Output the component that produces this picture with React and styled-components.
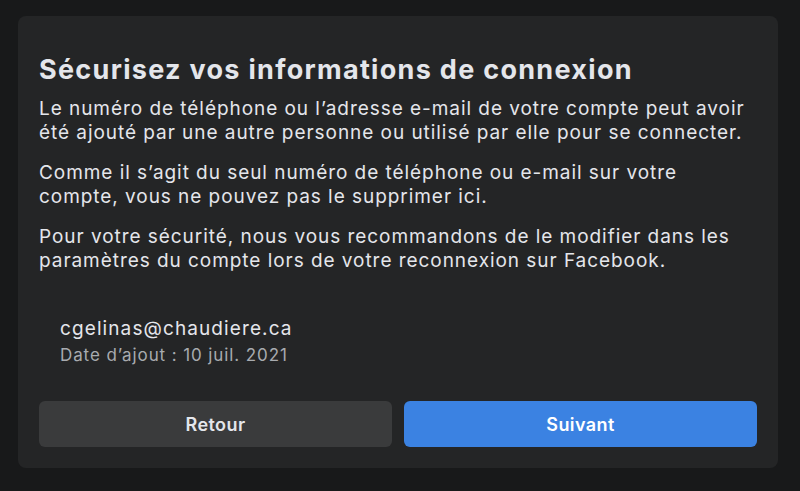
import styled, { createGlobalStyle } from "styled-components";

const Global = createGlobalStyle`
  html, body {
    margin: 0;
    padding: 0;
    background: #18191a;
    font-family: Inter, "Noto Sans", sans-serif;
    -webkit-font-smoothing: antialiased;
  }
`;

const Page = styled.div`
  padding: 16px 22px 23px 18px;
`;

const Card = styled.div`
  background: #242526;
  border-radius: 8px;
  padding: 38px 21px 21px 21px;
  display: flex;
  flex-direction: column;
`;

const Title = styled.h1`
  margin: 0 0 11px 0;
  font-size: 27px;
  line-height: 32px;
  font-weight: 700;
  letter-spacing: 1.3px;
  color: #e4e6eb;
`;

const Text = styled.p`
  margin: 0 0 16px 0;
  font-size: 19px;
  line-height: 24px;
  letter-spacing: 0.95px;
  color: #e4e6eb;
`;

const Contact = styled.div`
  padding: 28px 21px 35px;
  display: flex;
  flex-direction: column;
  gap: 3px;
`;

const Email = styled.div`
  font-size: 19px;
  line-height: 24px;
  letter-spacing: 1.1px;
  color: #e4e6eb;
`;

const Added = styled.div`
  font-size: 17px;
  line-height: 22px;
  letter-spacing: 0.9px;
  color: #a8abaf;
`;

const Actions = styled.div`
  display: grid;
  grid-template-columns: 1fr 1fr;
  gap: 12px;
`;

const Button = styled.button`
  height: 46px;
  border: none;
  border-radius: 6px;
  font-family: inherit;
  font-size: 18px;
  font-weight: 600;
  letter-spacing: 0.4px;
  color: ${(p) => (p.$primary ? "#ffffff" : "#e4e6eb")};
  background: ${(p) => (p.$primary ? "#3b82e2" : "#3a3b3c")};
  cursor: pointer;
`;

export default function App() {
  return (
    <>
      <Global />
      <Page>
        <Card>
          <Title>Sécurisez vos informations de connexion</Title>
          <Text>
            Le numéro de téléphone ou l’adresse e-mail de votre compte peut avoir
            été ajouté par une autre personne ou utilisé par elle pour se connecter.
          </Text>
          <Text>
            Comme il s’agit du seul numéro de téléphone ou e-mail sur votre
            compte, vous ne pouvez pas le supprimer ici.
          </Text>
          <Text>
            Pour votre sécurité, nous vous recommandons de le modifier dans les
            paramètres du compte lors de votre reconnexion sur Facebook.
          </Text>
          <Contact>
            <Email>cgelinas@chaudiere.ca</Email>
            <Added>Date d’ajout : 10 juil. 2021</Added>
          </Contact>
          <Actions>
            <Button>Retour</Button>
            <Button $primary>Suivant</Button>
          </Actions>
        </Card>
      </Page>
    </>
  );
}
